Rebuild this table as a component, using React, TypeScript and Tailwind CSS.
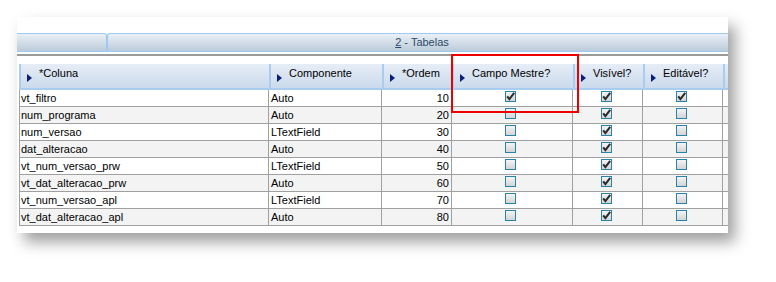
const rows = [
    { name: "vt_filtro", comp: "Auto", ordem: 10, mestre: true, visivel: true, editavel: true },
    { name: "num_programa", comp: "Auto", ordem: 20, mestre: false, visivel: true, editavel: false },
    { name: "num_versao", comp: "LTextField", ordem: 30, mestre: false, visivel: true, editavel: false },
    { name: "dat_alteracao", comp: "Auto", ordem: 40, mestre: false, visivel: true, editavel: false },
    { name: "vt_num_versao_prw", comp: "LTextField", ordem: 50, mestre: false, visivel: true, editavel: false },
    { name: "vt_dat_alteracao_prw", comp: "Auto", ordem: 60, mestre: false, visivel: true, editavel: false },
    { name: "vt_num_versao_apl", comp: "LTextField", ordem: 70, mestre: false, visivel: true, editavel: false },
    { name: "vt_dat_alteracao_apl", comp: "Auto", ordem: 80, mestre: false, visivel: true, editavel: false },
];

const headers = ["*Coluna", "Componente", "*Ordem", "Campo Mestre?", "Visível?", "Editável?"];

function Arrow() {
    return (
        <svg width="5" height="8" viewBox="0 0 5 8" className="mt-[7px] shrink-0">
            <polygon points="0,0 5,4 0,8" fill="#0b1f7a" />
        </svg>
    );
}

function Check({ checked }: { checked: boolean }) {
    return (
        <div className="w-[11px] h-[11px] mt-[1px] border border-[#2784a8] bg-gradient-to-b from-[#f4f4f4] to-[#d4d4d4] flex items-center justify-center">
            {checked && (
                <svg width="9" height="9" viewBox="0 0 9 9">
                    <path d="M1.2 4.3 L3.4 7.2 L8.2 0.8" fill="none" stroke="#2a2a2a" strokeWidth="2" />
                </svg>
            )}
        </div>
    );
}

export default function App() {
    return (
        <div className="w-[776px] h-[282px] bg-white overflow-hidden font-['Liberation_Sans',Arial,sans-serif] text-[11px] text-black">
            <div className="relative ml-[17px] mt-[17px] w-[711px] h-[216px] bg-white shadow-[7px_9px_14px_rgba(0,0,0,0.38)]">
                {/* Tabs */}
                <div className="pt-[16px] flex">
                    <div className="w-[90px] h-[19px] border-t border-b border-[#9ec9f0] rounded-tr-[3px] border-r bg-gradient-to-b from-[#eaf0f6] to-[#bccbda]" />
                    <div className="flex-1 h-[19px] border-t border-b border-l border-[#9ec9f0] rounded-tl-[3px] bg-gradient-to-b from-[#eaf0f6] to-[#bccbda] flex items-center justify-center">
                        <span className="text-[#2c4a68] pl-[8px]"><span className="underline">2</span> - Tabelas</span>
                    </div>
                </div>
                <div className="mt-[2px] h-[2px] bg-[#9a9a9a]" />

                {/* Table */}
                <div className="mt-[8px] ml-[2px] grid grid-cols-[250px_113px_70px_121px_70px_80px_1fr]">
                    {headers.map((h) => (
                        <div key={h} className="h-[26px] border-l-2 border-b-2 border-[#a8cdf0] bg-gradient-to-b from-[#e6edf6] to-[#cbdaec] flex items-start gap-[7px] pl-[6px] pt-[3px]">
                            <Arrow />
                            <span className="leading-[13px]">{h}</span>
                        </div>
                    ))}
                    <div className="h-[26px] border-l-2 border-b-2 border-[#a8cdf0] bg-gradient-to-b from-[#e6edf6] to-[#cbdaec]" />

                    {rows.map((r, i) => {
                        const bg = i % 2 === 0 ? "bg-white" : "bg-[#f3f3f3]";
                        const cell = `h-[17px] border-r border-b border-[#a0a0a0] ${bg}`;
                        return [
                            <div key={`a${i}`} className={`${cell} border-l pl-[1px] leading-[16px]`}>{r.name}</div>,
                            <div key={`b${i}`} className={`${cell} pl-[2px] leading-[16px]`}>{r.comp}</div>,
                            <div key={`c${i}`} className={`${cell} pr-[2px] text-right leading-[16px]`}>{r.ordem}</div>,
                            <div key={`d${i}`} className={`${cell} flex justify-center pr-[3px]`}><Check checked={r.mestre} /></div>,
                            <div key={`e${i}`} className={`${cell} flex justify-center pr-[2px]`}><Check checked={r.visivel} /></div>,
                            <div key={`f${i}`} className={`${cell} flex justify-center pr-[2px]`}><Check checked={r.editavel} /></div>,
                            <div key={`g${i}`} className={`h-[17px] border-b border-[#a0a0a0] ${bg}`} />,
                        ];
                    })}
                </div>

                {/* Highlight */}
                <div className="absolute left-[434px] top-[37px] w-[128px] h-[59px] border-2 border-[#ee0000]" />
            </div>
        </div>
    );
}
